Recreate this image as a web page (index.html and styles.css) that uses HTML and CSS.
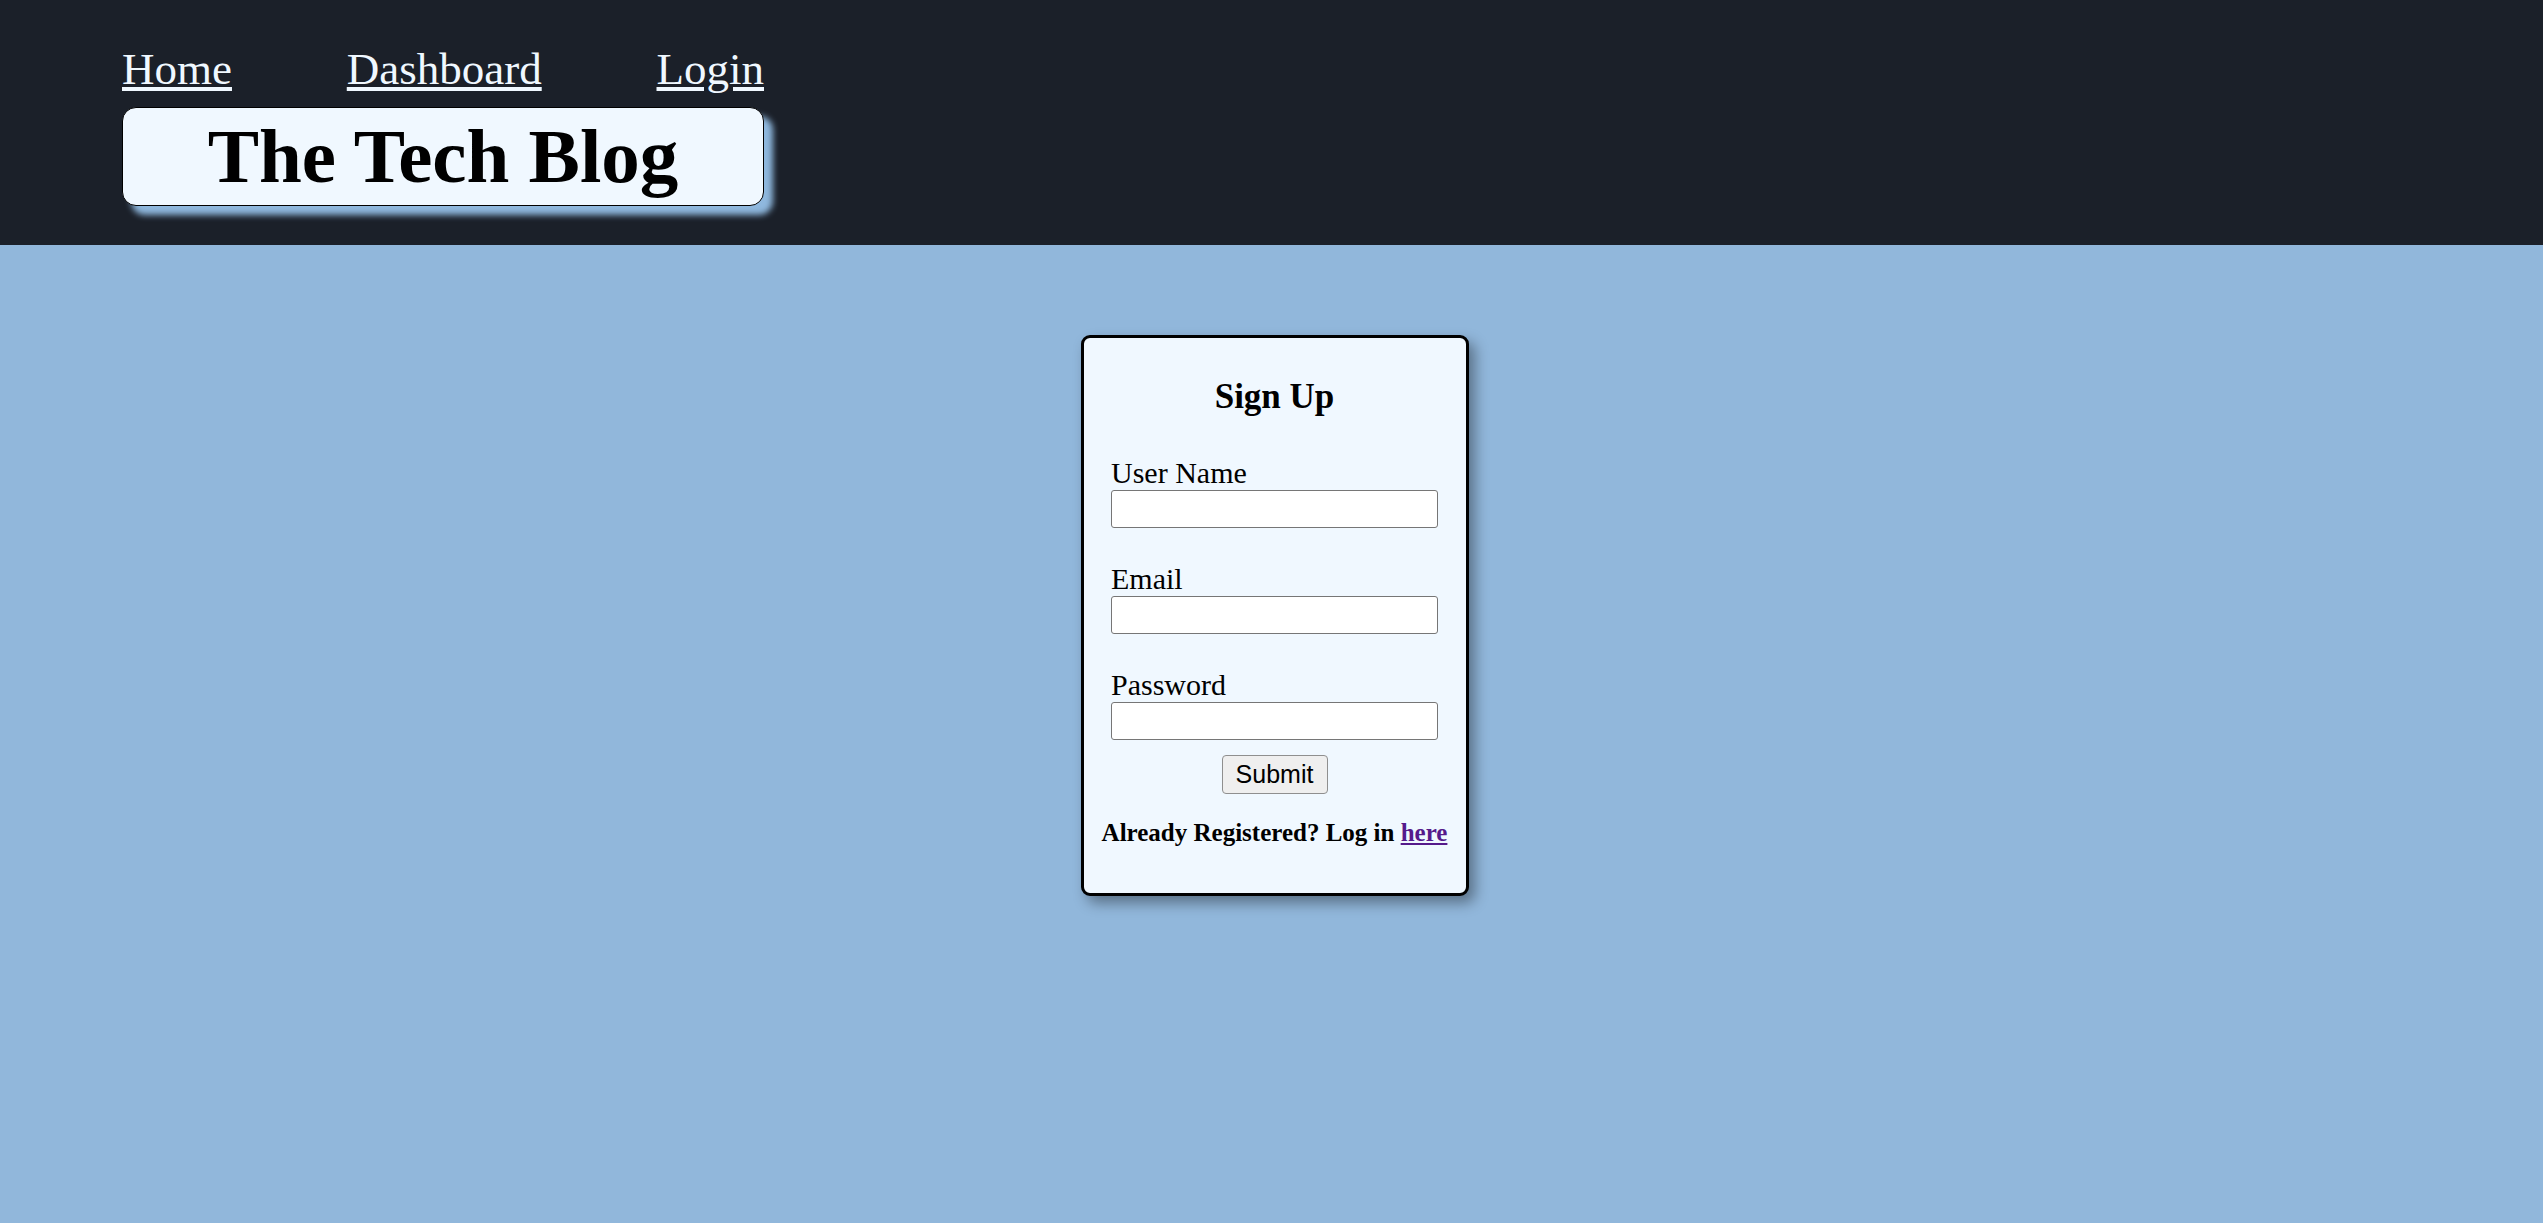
FILE: index.html
```html
<!DOCTYPE html>
<html lang="en">
<head>
<meta charset="utf-8">
<title>The Tech Blog</title>
<link rel="stylesheet" href="styles.css">
</head>
<body>
<header class="site-header">
  <div class="brand">
    <nav class="nav">
      <a href="#" class="nav-link">Home</a>
      <a href="#" class="nav-link">Dashboard</a>
      <a href="#" class="nav-link">Login</a>
    </nav>
    <h1 class="title-box">The Tech Blog</h1>
  </div>
</header>
<main class="main">
  <form class="card">
    <h3 class="card-title">Sign Up</h3>
    <label class="field-label" for="username">User Name</label>
    <input class="field-input" id="username" type="text">
    <label class="field-label gap" for="email">Email</label>
    <input class="field-input" id="email" type="email">
    <label class="field-label gap" for="password">Password</label>
    <input class="field-input" id="password" type="password">
    <div class="actions"><button class="submit" type="button">Submit</button></div>
    <h5 class="already">Already Registered? Log in <a href="#" class="here">here</a></h5>
  </form>
</main>
</body>
</html>
```
FILE: styles.css
```css
html, body {
  margin: 0;
  padding: 0;
}
body {
  background: #91b7db;
  font-family: "Liberation Serif", "Times New Roman", serif;
  color: #000;
  min-height: 1223px;
}
.site-header {
  background: #1b2029;
  height: 245px;
  box-sizing: border-box;
  padding: 43px 0 0 122px;
}
.brand {
  width: 642px;
  display: flex;
  flex-direction: column;
}
.nav {
  display: flex;
  justify-content: space-between;
  height: 52px;
}
.nav-link {
  color: #f0f8ff;
  font-size: 45px;
  line-height: 52px;
  text-decoration: underline;
}
.title-box {
  margin: 12px 0 0 0;
  background: #f0f8ff;
  border: 1px solid #000;
  border-radius: 14px;
  box-shadow: 9px 9px 6px #8fb8de;
  font-size: 77px;
  font-weight: bold;
  line-height: 86px;
  padding: 5px 0 6px;
  text-align: center;
}
.main {
  display: flex;
  justify-content: center;
  padding: 90px 0 0 7px;
}
.card {
  width: 388px;
  box-sizing: border-box;
  background: #f0f8ff;
  border: 3px solid #000;
  border-radius: 9px;
  box-shadow: 6px 7px 14px rgba(0, 0, 0, 0.38);
  padding: 39px 28px 46px 27px;
  display: flex;
  flex-direction: column;
}
.card-title {
  margin: 0 0 39px;
  font-size: 35px;
  line-height: 40px;
  font-weight: bold;
  text-align: center;
}
.field-label {
  display: block;
  font-size: 30px;
  line-height: 34px;
}
.field-label.gap {
  margin-top: 34px;
}
.field-input {
  display: block;
  width: 100%;
  height: 38px;
  box-sizing: border-box;
  margin: 0;
  border: 1px solid #767676;
  border-radius: 3px;
  background: #fff;
  font-family: "Liberation Sans", Arial, sans-serif;
  font-size: 25px;
  padding: 2px 4px;
}
.actions {
  display: flex;
  justify-content: center;
  margin-top: 15px;
}
.submit {
  height: 39px;
  width: 106px;
  box-sizing: border-box;
  background: #efefef;
  border: 1px solid #8f8f8f;
  border-radius: 4px;
  font-family: "Liberation Sans", Arial, sans-serif;
  font-size: 25px;
  color: #000;
  padding: 0;
}
.already {
  margin: 24px -20px 0;
  font-size: 25px;
  line-height: 29px;
  font-weight: bold;
  text-align: center;
  white-space: nowrap;
}
.here {
  color: #551a8b;
  text-decoration: underline;
}
```
